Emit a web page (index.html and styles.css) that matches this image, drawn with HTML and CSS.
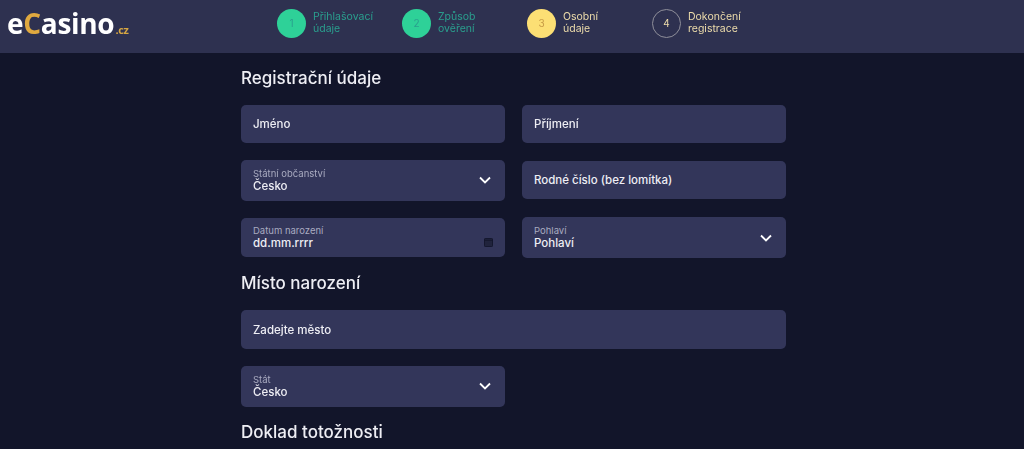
FILE: index.html
```html
<!DOCTYPE html>
<html lang="cs">

<head>
   <meta charset="utf-8">
   <title>eCasino.cz - Registrace</title>
   <link rel="stylesheet" href="styles.css">
</head>

<body>
   <header class="topbar">
      <a class="logo" href="#">e<span class="logo-c">C</span>asino<span class="logo-tld">.cz</span></a>
      <ol class="steps">
         <li class="step step-done"><span class="step-num">1</span><span class="step-text">Přihlašovací<br>údaje</span></li>
         <li class="step step-done"><span class="step-num">2</span><span class="step-text">Způsob<br>ověření</span></li>
         <li class="step step-active"><span class="step-num">3</span><span class="step-text">Osobní<br>údaje</span></li>
         <li class="step"><span class="step-num">4</span><span class="step-text">Dokončení<br>registrace</span></li>
      </ol>
   </header>

   <main class="form">
      <h2 class="form-title">Registrační údaje</h2>
      <div class="grid">
         <div class="field">Jméno</div>
         <div class="field">Příjmení</div>

         <div class="field field-select">
            <div><small>Státní občanství</small>Česko</div>
            <svg class="chevron" viewBox="0 0 12 8"><path d="M1 1.5l5 5 5-5" /></svg>
         </div>
         <div class="field">Rodné číslo (bez lomítka)</div>

         <div class="field field-date">
            <div><small>Datum narození</small>dd.mm.rrrr</div>
            <svg class="calendar" viewBox="0 0 10 10"><rect x="0.5" y="0.5" width="9" height="9" rx="1" /><path d="M0.5 2.5h9" /></svg>
         </div>
         <div class="field field-select">
            <div><small>Pohlaví</small>Pohlaví</div>
            <svg class="chevron" viewBox="0 0 12 8"><path d="M1 1.5l5 5 5-5" /></svg>
         </div>
      </div>

      <h2 class="form-title">Místo narození</h2>
      <div class="grid">
         <div class="field field-wide">Zadejte město</div>
         <div class="field field-select">
            <div><small>Stát</small>Česko</div>
            <svg class="chevron" viewBox="0 0 12 8"><path d="M1 1.5l5 5 5-5" /></svg>
         </div>
      </div>

      <h2 class="form-title">Doklad totožnosti</h2>
   </main>
</body>

</html>
```

FILE: styles.css
```css
body {
   margin: 0;
   height: 449px;
   overflow: hidden;
   background: #12152a;
   color: #fff;
   font-family: "Inter", "Liberation Sans", sans-serif;
}

.topbar {
   display: flex;
   align-items: center;
   box-sizing: border-box;
   height: 53px;
   padding: 0 0 7px 7px;
   background: #2e3150;
   filter: blur(0.4px);
}

.logo {
   width: 270px;
   color: #fff;
   font-family: "Open Sans", sans-serif;
   font-size: 28px;
   font-weight: 700;
   letter-spacing: -0.3px;
   text-decoration: none;
}

.logo-c {
   color: #e0a93f;
}

.logo-tld {
   margin-left: 1px;
   color: #d6a643;
   font-size: 11px;
}

.steps {
   display: flex;
   margin: 0;
   padding: 0;
   list-style: none;
}

.step {
   display: flex;
   align-items: center;
   gap: 7px;
   width: 125px;
   color: #eddcab;
   font-size: 10.5px;
   line-height: 12px;
}

.step-num {
   display: flex;
   align-items: center;
   justify-content: center;
   box-sizing: border-box;
   width: 29px;
   height: 29px;
   border: 1px solid #8f8f9a;
   border-radius: 50%;
   font-size: 10px;
}

.step-done {
   color: #2a9f8e;
}

.step-done .step-num {
   border: 0;
   background: #2ed198;
}

.step-active .step-num {
   border: 0;
   background: #fcdf74;
   color: #c79a45;
}

.form {
   width: 545px;
   margin-left: 241px;
   filter: blur(0.4px);
}

.form-title {
   margin: 0;
   padding: 15px 0 17px;
   font-size: 17px;
   font-weight: 500;
   line-height: 20px;
   color: #eeeef4;
}

.grid {
   display: grid;
   grid-template-columns: 264px 264px;
   column-gap: 17px;
   row-gap: 16.5px;
   align-items: center;
}

.field {
   display: flex;
   align-items: center;
   justify-content: space-between;
   box-sizing: border-box;
   height: 38px;
   padding: 0 12px;
   border-radius: 5px;
   background: #33365a;
   color: #eeeef4;
   font-size: 11.5px;
   font-weight: 500;
}

.field-select {
   height: 41px;
   padding-right: 14px;
}

.field-date {
   height: 39px;
}

.field-wide {
   grid-column: 1 / 3;
   height: 39px;
}

.field small {
   display: block;
   color: #a9abc0;
   font-size: 9.5px;
   font-weight: 400;
   line-height: 11px;
}

.chevron {
   width: 12px;
   height: 8px;
   fill: none;
   stroke: #fff;
   stroke-width: 1.8;
}

.calendar {
   width: 9px;
   height: 9px;
   margin-top: 10px;
   fill: #20233c;
   stroke: #12152a;
}
```
